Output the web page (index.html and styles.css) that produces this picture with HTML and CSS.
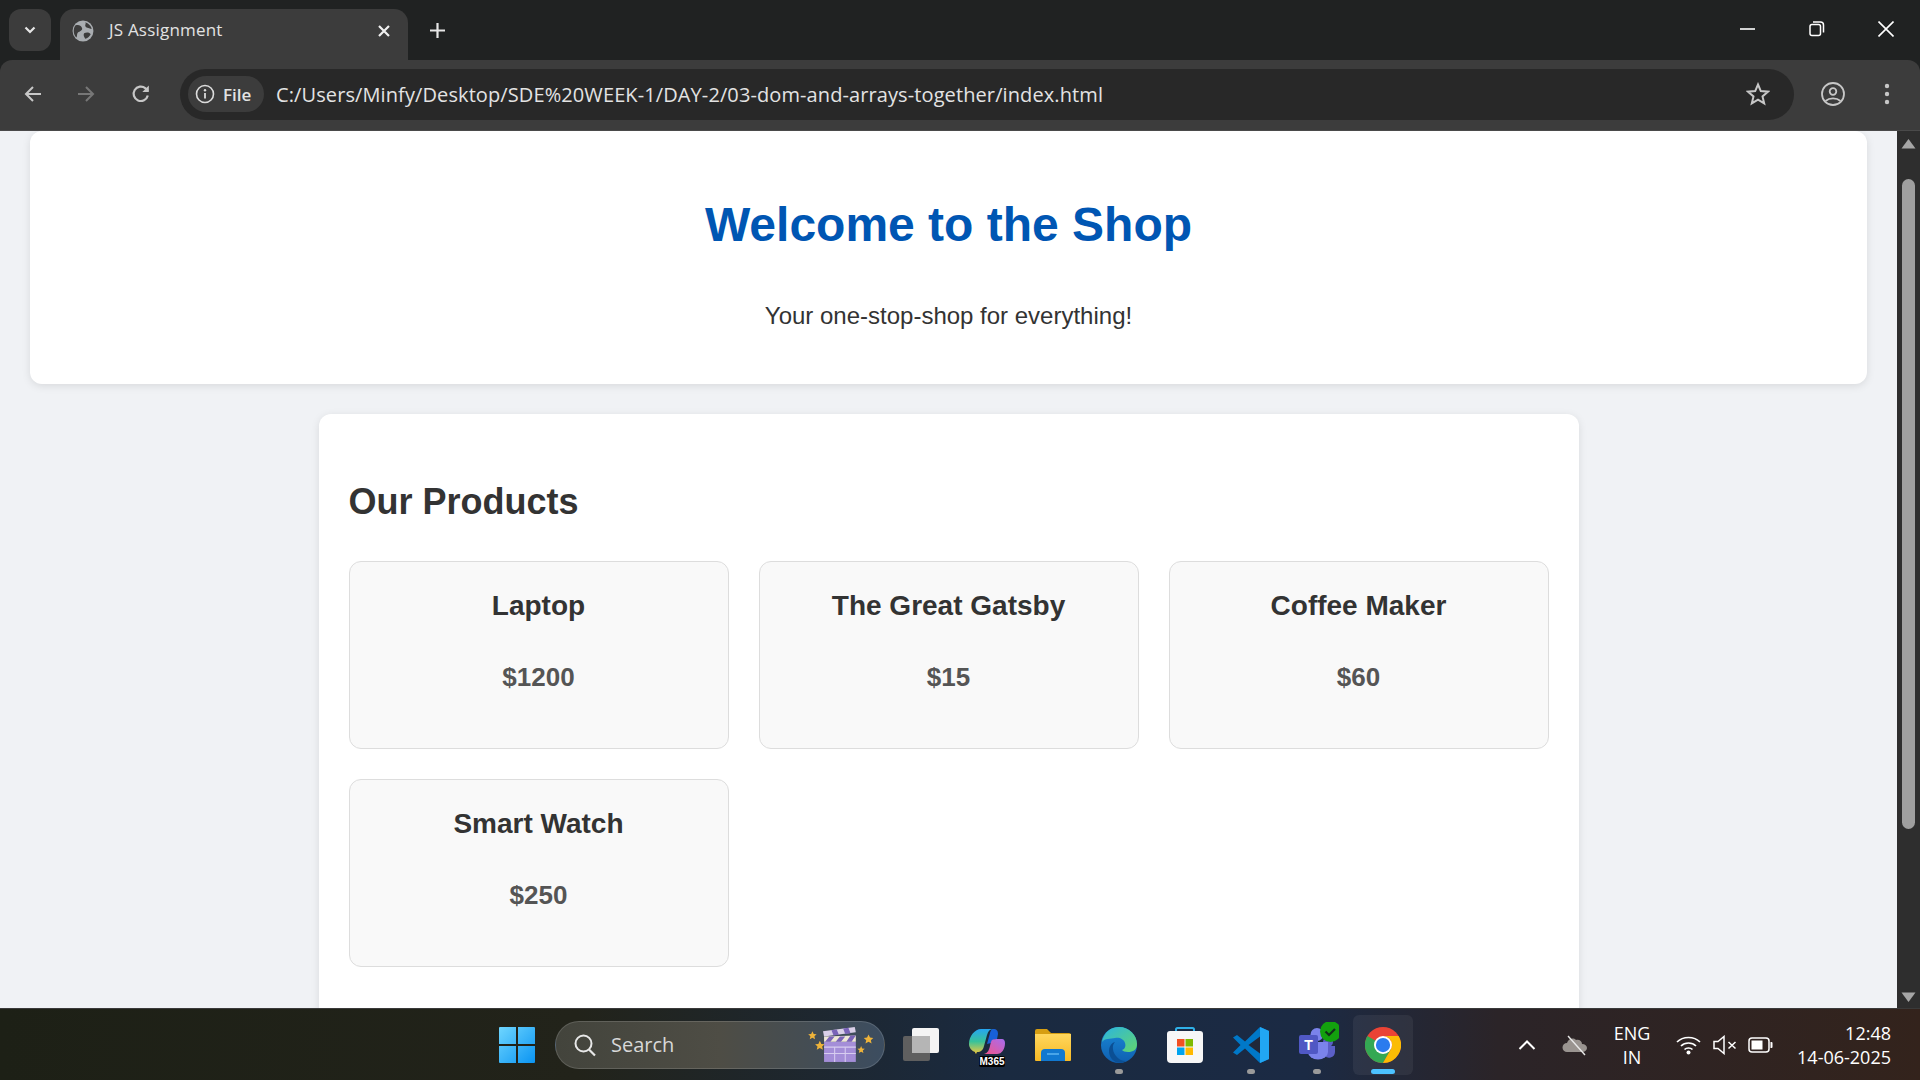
FILE: index.html
```html
<!DOCTYPE html>
<html lang="en">
<head>
<meta charset="utf-8">
<title>JS Assignment</title>
<link rel="stylesheet" href="styles.css">
</head>
<body>
<div class="tabstrip">
  <div class="tab-menu"><svg width="16" height="16" viewBox="0 0 16 16"><path d="M3.500 5.500l4.500 4.500 4.500-4.500" fill="none" stroke="#e6e6e6" stroke-width="2.200"/></svg></div>
  <div class="tab">
    <svg class="favicon" width="22" height="22" viewBox="0 0 20 20"><circle cx="10" cy="10" r="9.500" fill="#a9adb1"/><path d="M3 5c3-1 5 0 6 2s-1 3-3 4-1 4-2 5C1 13 1 8 3 5zM12 2c3 1 5 3 6 6-2 0-3-1-4-1s-2-1-2-2 1-2 0-3zM11 12c2-1 5-1 6 1-1 2-3 4-5 4-1-2-2-3-1-5z" fill="#3c3c3c"/></svg>
    <span class="tab-title">JS Assignment</span>
    <svg class="tab-close" width="14" height="14" viewBox="0 0 14 14"><path d="M2 2l10 10M12 2L2 12" stroke="#f0f0f0" stroke-width="2.200"/></svg>
  </div>
  <svg class="new-tab" width="17" height="17" viewBox="0 0 17 17"><path d="M8.500 1v15M1 8.500h15" stroke="#e6e6e6" stroke-width="2.200"/></svg>
  <div class="win-controls">
    <svg width="16" height="16" viewBox="0 0 16 16"><path d="M0 8h15" stroke="#fff" stroke-width="1.600"/></svg>
    <svg width="16" height="16" viewBox="0 0 16 16"><rect x="1" y="3.500" width="10.500" height="11" rx="2" fill="none" stroke="#fff" stroke-width="1.500"/><path d="M4 1h7.500A3 3 0 0 1 14.500 4v7.500" fill="none" stroke="#fff" stroke-width="1.500"/></svg>
    <svg width="16" height="16" viewBox="0 0 16 16"><path d="M.5.500l15 15M15.500.500l-15 15" stroke="#fff" stroke-width="1.600"/></svg>
  </div>
</div>
<div class="toolbar">
  <svg class="nav nav-back" width="20" height="20" viewBox="0 0 20 20"><path d="M18 10H3M10 3l-7 7 7 7" fill="none" stroke="#c7c7c7" stroke-width="2"/></svg>
  <svg class="nav nav-fwd" width="20" height="20" viewBox="0 0 20 20"><path d="M2 10h15M10 3l7 7-7 7" fill="none" stroke="#777" stroke-width="2"/></svg>
  <svg class="nav nav-reload" width="20" height="20" viewBox="0 0 20 20"><path d="M16.800 11.500A7.200 7.200 0 1 1 14.500 4.300L17 7" fill="none" stroke="#c7c7c7" stroke-width="2.200"/><path d="M17.800 1.500v6.500h-6.500z" fill="#c7c7c7"/></svg>
  <div class="omnibox">
    <div class="chip">
      <svg width="20" height="20" viewBox="0 0 20 20"><circle cx="10" cy="10" r="8.500" fill="none" stroke="#dcdcdc" stroke-width="1.600"/><path d="M10 9v5.500" stroke="#dcdcdc" stroke-width="1.800"/><circle cx="10" cy="6.300" r="1.200" fill="#dcdcdc"/></svg>
      <span class="chip-label">File</span>
    </div>
    <span class="url">C:/Users/Minfy/Desktop/SDE%20WEEK-1/DAY-2/03-dom-and-arrays-together/index.html</span>
    <svg class="star" width="24" height="24" viewBox="0 0 24 24"><path d="M12 2.500l2.800 6.600 7.200.600-5.500 4.700 1.700 7-6.200-3.700-6.200 3.700 1.700-7L2 9.700l7.200-.600z" fill="none" stroke="#c7c7c7" stroke-width="2"/></svg>
  </div>
  <svg class="profile" width="24" height="24" viewBox="0 0 24 24"><circle cx="12" cy="12" r="11" fill="none" stroke="#c7c7c7" stroke-width="1.800"/><circle cx="12" cy="9.500" r="3.300" fill="none" stroke="#c7c7c7" stroke-width="1.800"/><path d="M4.500 19c4-3.500 11-3.500 15 0" fill="none" stroke="#c7c7c7" stroke-width="1.800"/></svg>
  <svg class="kebab" width="6" height="22" viewBox="0 0 6 22"><circle cx="3" cy="3" r="2.200" fill="#c7c7c7"/><circle cx="3" cy="11" r="2.200" fill="#c7c7c7"/><circle cx="3" cy="19" r="2.200" fill="#c7c7c7"/></svg>
</div>
<div class="viewport">
  <div class="page">
    <header class="hero">
      <h1 class="hero-title">Welcome to the Shop</h1>
      <p class="hero-sub">Your one-stop-shop for everything!</p>
    </header>
    <main class="products">
      <h2 class="products-title">Our Products</h2>
      <div class="product-grid">
        <div class="product"><h3 class="product-name">Laptop</h3><p class="product-price">$1200</p></div>
        <div class="product"><h3 class="product-name">The Great Gatsby</h3><p class="product-price">$15</p></div>
        <div class="product"><h3 class="product-name">Coffee Maker</h3><p class="product-price">$60</p></div>
        <div class="product"><h3 class="product-name">Smart Watch</h3><p class="product-price">$250</p></div>
      </div>
    </main>
  </div>
  <div class="scrollbar">
    <svg width="15" height="11" viewBox="0 0 15 11" class="sb-up"><path d="M7.500 1L14.500 10.500H.5z" fill="#a6a6a6"/></svg>
    <div class="sb-thumb"></div>
    <svg width="15" height="11" viewBox="0 0 15 11" class="sb-down"><path d="M7.500 10L.5.500h14z" fill="#a6a6a6"/></svg>
  </div>
</div>
<footer class="taskbar">
  <div class="slot slot-start">
    <svg width="36" height="36" viewBox="0 0 36 36"><defs><linearGradient id="w" x1="0" y1="0" x2="1" y2="1"><stop offset="0" stop-color="#6fd6ff"/><stop offset="1" stop-color="#0a94f2"/></linearGradient></defs><path d="M1 0h16v17H0V1a1 1 0 0 1 1-1zM19 0h16a1 1 0 0 1 1 1v16H19zM0 19h17v17H1a1 1 0 0 1-1-1zM19 19h17v16a1 1 0 0 1-1 1H19z" fill="url(#w)"/></svg>
  </div>
  <div class="search">
    <svg width="24" height="24" viewBox="0 0 24 24"><circle cx="10.500" cy="10.500" r="8" fill="none" stroke="#e8e8e8" stroke-width="2"/><path d="M16 16.500l6 6" stroke="#e8e8e8" stroke-width="2.200"/></svg>
    <span class="search-label">Search</span>
    <svg class="clapper" width="72" height="36" viewBox="0 0 68 34"><rect x="18" y="14" width="30" height="19" fill="#a48ed8"/><path d="M18 19h30M18 25h30M28 19v14M38 19v14" stroke="#d7cdf0" stroke-width="1"/><path d="M18 9l30-1v6H18z" fill="#efe7d8"/><path d="M23 9l-4 5h5l4-5zM33 9l-4 5h5l4-5zM43 8l-4 6h5l4-6z" fill="#7a63b8"/><path d="M17 4l30-4 1 5-30 4z" fill="#d9cfe8"/><path d="M25 3l2 5 5-.7-2-5zM36 1.500l2 5 5-.7-2-5z" fill="#7a63b8"/><path d="M7 4l1.200 2.600 2.800.3-2.100 1.900.6 2.800L7 10.200l-2.500 1.400.6-2.800L3 6.900l2.800-.3zM14 13l1.400 3 3.100.3-2.300 2.100.7 3.100-2.900-1.600-2.900 1.600.7-3.100-2.300-2.100 3.100-.3zM60 7l1.400 3 3.100.3-2.300 2.100.7 3.100-2.900-1.600-2.900 1.600.7-3.100-2.300-2.100 3.100-.3zM53 18l1 2.300 2.500.2-1.900 1.700.6 2.400-2.200-1.300-2.200 1.300.6-2.400-1.900-1.700 2.500-.2z" fill="#eeb33a"/></svg>
  </div>
  <div class="slot">
    <svg width="38" height="36" viewBox="0 0 38 36"><rect x="1" y="9" width="27" height="25" rx="2" fill="#5f5f5f"/><rect x="10" y="1" width="27" height="25" rx="2" fill="#f4f4f4"/><rect x="10" y="9" width="18" height="17" fill="#b5b5b5"/></svg>
  </div>
  <div class="slot">
    <svg width="36" height="36" viewBox="0 0 36 36"><defs><linearGradient id="m1" x1="0" y1="0" x2="0" y2="1"><stop offset="0" stop-color="#25a5f2"/><stop offset=".5" stop-color="#38c29a"/><stop offset="1" stop-color="#f5c83a"/></linearGradient><linearGradient id="m2" x1="0" y1="1" x2="1" y2="0"><stop offset="0" stop-color="#f0558a"/><stop offset="1" stop-color="#a76cf0"/></linearGradient></defs><path d="M24 2c4 0 5 2 5 5l-1 5c-3 0-5 1-6 4l-4 1 3-11c.5-2 1.500-4 3-4z" fill="#1760d8"/><path d="M12 2h12c-3 0-5 2-6 6l-3 11c-1 4-3 6-7 6l-1 2c-1-1-1-2-1-2-3-1-6-4-6-8C0 9 6 2 12 2z" fill="url(#m1)"/><path d="M23 13c1.500-1 3-1 10-1 2 0 3 2 3 4 0 6-3 11-8 11H15c4-1 5-4 6-8 .5-2 1-5 2-6z" fill="url(#m2)"/></svg>
    <span class="m365">M365</span>
  </div>
  <div class="slot">
    <svg width="36" height="34" viewBox="0 0 36 34"><defs><linearGradient id="f" x1="0" y1="0" x2="0" y2="1"><stop offset="0" stop-color="#ffd75e"/><stop offset="1" stop-color="#f7b924"/></linearGradient></defs><path d="M0 3a2 2 0 0 1 2-2h10l4 4h18a2 2 0 0 1 2 2v4H0z" fill="#d69e12"/><path d="M0 6h36v26a1 1 0 0 1-1 1H1a1 1 0 0 1-1-1z" fill="url(#f)"/><path d="M6 33V25a4 4 0 0 1 4-4h16a4 4 0 0 1 4 4v8z" fill="#1178d0"/><path d="M12 26h12" stroke="#5cb4f0" stroke-width="1.500"/></svg>
  </div>
  <div class="slot has-dot">
    <svg width="36" height="36" viewBox="0 0 36 36"><defs><linearGradient id="e1" x1="0" y1="0" x2="1" y2="1"><stop offset="0" stop-color="#2bb4e0"/><stop offset="1" stop-color="#62d66f"/></linearGradient><linearGradient id="e2" x1="0" y1="0" x2="0" y2="1"><stop offset="0" stop-color="#1a8ad8"/><stop offset="1" stop-color="#0f5fb0"/></linearGradient></defs><circle cx="18" cy="18" r="18" fill="url(#e2)"/><path d="M1 15C3 5 10 0 18 0c10 0 18 8 18 17 0 6-4 8-9 8-3 0-5-1-6-2 3-1 4-4 3-7-1-4-6-6-10-5C9 12 4 11 1 15z" fill="url(#e1)"/><path d="M14 15c-3 3-3 9 1 14 2 3 6 5 10 5-8 5-17-1-17-10 0-4 2-8 6-9z" fill="#0b4f94"/></svg>
    <span class="dot"></span>
  </div>
  <div class="slot">
    <svg width="36" height="36" viewBox="0 0 36 36"><path d="M9 5V2.500a1.500 1.500 0 0 1 1.500-1.500h15A1.500 1.500 0 0 1 27 2.500V5" fill="none" stroke="#2fb0e8" stroke-width="2"/><path d="M0 7a3 3 0 0 1 3-3h30a3 3 0 0 1 3 3v25a4 4 0 0 1-4 4H4a4 4 0 0 1-4-4z" fill="#f7f7f7"/><rect x="10" y="12" width="7.500" height="7.500" fill="#f25022"/><rect x="18.500" y="12" width="7.500" height="7.500" fill="#7fba00"/><rect x="10" y="20.500" width="7.500" height="7.500" fill="#00a4ef"/><rect x="18.500" y="20.500" width="7.500" height="7.500" fill="#ffb900"/></svg>
  </div>
  <div class="slot has-dot">
    <svg width="36" height="38" viewBox="0 0 36 36"><path d="M27 0l9 4v28l-9 4-15-14.500L4 28l-4-2.500 7.500-7.500L0 10.500 4 8l8 6.500z" fill="#0078c8"/><path d="M27 0l9 4v28l-9 4z" fill="#21a6f3"/><path d="M27 9.500L15.500 18 27 26.500z" fill="#20283a"/></svg>
    <span class="dot"></span>
  </div>
  <div class="slot has-dot">
    <svg class="teams" width="44" height="44" viewBox="0 0 44 44"><circle cx="22" cy="12.500" r="6.500" fill="#7b83eb"/><circle cx="33" cy="20" r="5" fill="#5b5fc7"/><path d="M29 24h11v6a6 6 0 0 1-11 3z" fill="#5b5fc7"/><path d="M13 20h20v10a10 7.500 0 0 1-20 0z" fill="#7b83eb"/><rect x="4" y="13" width="19" height="19" rx="2" fill="#5058c4"/><text x="13.500" y="28" class="teams-t">T</text><circle cx="35.500" cy="9.500" r="10.500" fill="#13a10e"/><path d="M30.500 9.500l3.500 3.500 6-6" fill="none" stroke="#12301a" stroke-width="2.200"/></svg>
    <span class="dot"></span>
  </div>
  <div class="slot slot-active">
    <svg width="36" height="36" viewBox="0 0 48 48"><circle cx="24" cy="24" r="24" fill="#ea4335"/><path d="M24 24L3.200 12A24 24 0 0 0 24 48l10.400-18z" fill="#34a853"/><path d="M24 12h20.800A24 24 0 0 1 24 48l10.400-18A12 12 0 0 0 24 12z" fill="#fbbc04"/><circle cx="24" cy="24" r="12" fill="#fff"/><circle cx="24" cy="24" r="9.500" fill="#2b7bee"/></svg>
    <span class="dot dot-active"></span>
  </div>
  <div class="tray">
    <div class="tray-item tray-chevron"><svg width="18" height="12" viewBox="0 0 18 12"><path d="M1.500 10L9 2.500 16.500 10" fill="none" stroke="#fff" stroke-width="2"/></svg></div>
    <div class="tray-item tray-cloud"><svg width="26" height="22" viewBox="0 0 26 22"><path d="M5 18a4.500 4.500 0 0 1 0-9c1-4 6-6 9-3 3-1 6 1 6 4 3 0 5 2 5 4s-2 4-5 4z" fill="#9a9490"/><path d="M6 2l17 19" stroke="#e8e8e8" stroke-width="1.400"/></svg></div>
    <div class="tray-lang"><span>ENG</span><span>IN</span></div>
    <div class="tray-item tray-wifi"><svg width="25" height="20" viewBox="0 0 25 20"><path d="M1 7c6-6 17-6 23 0M5 11c4-4 11-4 15 0M8.500 14.500c2-2 6-2 8 0" fill="none" stroke="#fff" stroke-width="1.700"/><circle cx="12.500" cy="17.500" r="2" fill="#fff"/></svg></div>
    <div class="tray-item tray-vol"><svg width="24" height="20" viewBox="0 0 24 20"><path d="M1 6.500h4L11 1.500v17l-6-5H1z" fill="none" stroke="#fff" stroke-width="1.500"/><path d="M15.500 7l7 6.500M22.500 7l-7 6.500" stroke="#fff" stroke-width="1.500"/></svg></div>
    <div class="tray-item tray-batt"><svg width="25" height="16" viewBox="0 0 25 16"><rect x="1" y="1" width="20" height="14" rx="3" fill="none" stroke="#fff" stroke-width="1.500"/><rect x="3.500" y="3.500" width="11" height="9" fill="#fff"/><path d="M22.500 5h1a1 1 0 0 1 1 1v4a1 1 0 0 1-1 1h-1z" fill="#fff"/></svg></div>
    <div class="tray-clock"><span>12:48</span><span>14-06-2025</span></div>
  </div>
</footer>
</body>
</html>
```
FILE: styles.css
```css
* { box-sizing: border-box; }
html, body { margin: 0; height: 100%; }
body {
  display: flex;
  flex-direction: column;
  height: 100vh;
  overflow: hidden;
  font-family: "Liberation Sans", Arial, sans-serif;
  background: #202222;
}

/* Browser chrome */
.tabstrip {
  height: 60px;
  flex: none;
  display: flex;
  align-items: flex-start;
  background: #202222;
  padding: 9px 0 0 9px;
}
.tab-menu {
  width: 42px;
  height: 42px;
  border-radius: 12px;
  background: #3c3c3c;
  display: flex;
  align-items: center;
  justify-content: center;
}
.tab {
  margin-left: 9px;
  width: 348px;
  height: 51px;
  background: #3c3c3c;
  border-radius: 14px 14px 0 0;
  display: flex;
  align-items: center;
  padding: 0 17px 7px 12px;
  color: #e3e3e3;
}
.tab-title {
  margin-left: 15px;
  font-family: "Open Sans", sans-serif;
  font-size: 17px;
  letter-spacing: 0.2px;
  line-height: 22px;
  margin-bottom: 2px;
  flex: 1;
}
.new-tab { margin: 13px 0 0 21px; }
.win-controls {
  margin-left: auto;
  display: flex;
  gap: 53px;
  padding: 12px 26px 0 0;
}
.toolbar {
  height: 71px;
  flex: none;
  display: flex;
  align-items: center;
  background: #3c3c3c;
  border-radius: 12px 12px 0 0;
  border-bottom: 1px solid #4a4a4a;
  padding: 0 0 2px 23px;
}
.nav-fwd { margin-left: 33px; }
.nav-reload { margin-left: 35px; }
.omnibox {
  margin-left: 29px;
  width: 1614px;
  height: 51px;
  background: #282828;
  border-radius: 26px;
  display: flex;
  align-items: center;
  padding: 0 24px 0 8px;
}
.chip {
  width: 76px;
  height: 36px;
  border-radius: 18px;
  background: #3c3c3c;
  display: flex;
  align-items: center;
  padding-left: 7px;
  gap: 8px;
}
.chip-label {
  font-family: "Open Sans", sans-serif;
  font-weight: 600;
  font-size: 17px;
  color: #e3e3e3;
}
.url {
  margin-left: 12px;
  font-family: "Open Sans", sans-serif;
  font-size: 20px;
  letter-spacing: 0.1px;
  color: #e3e3e3;
  white-space: nowrap;
}
.star { margin-left: auto; }
.profile { margin-left: 27px; }
.kebab { margin-left: 39px; }

/* Page */
.viewport {
  flex: 1;
  min-height: 0;
  display: flex;
  overflow: hidden;
}
.page {
  flex: 1;
  min-width: 0;
  background: #f0f2f5;
  padding: 0 30px;
  line-height: 1.6;
  color: #333;
}
.hero {
  height: 253px;
  background: #fff;
  border-radius: 12px;
  box-shadow: 0 2px 8px rgba(0, 0, 0, 0.1);
  text-align: center;
  padding-top: 56px;
}
.hero-title {
  margin: 0;
  font-size: 48px;
  color: #0056b3;
}
.hero-sub {
  margin: 33px 0 0;
  font-size: 24px;
}
.products {
  width: 1260px;
  margin: 30px auto 0;
  background: #fff;
  border-radius: 12px;
  box-shadow: 0 2px 8px rgba(0, 0, 0, 0.1);
  padding: 59px 30px 120px;
}
.products-title {
  margin: 0 0 30px;
  font-size: 36px;
}
.product-grid {
  display: grid;
  grid-template-columns: repeat(3, 1fr);
  gap: 30px;
}
.product {
  background: #f9f9f9;
  border: 1px solid #ddd;
  border-radius: 12px;
  padding: 22px 20px 20px;
  text-align: center;
}
.product-name {
  margin: 0 0 29px;
  font-size: 28px;
}
.product-price {
  margin: 0 0 28.6px;
  font-size: 26px;
  font-weight: 700;
  color: #555;
}
.scrollbar {
  width: 23px;
  flex: none;
  background: #2e2e2e;
  display: flex;
  flex-direction: column;
  align-items: center;
  padding-top: 7px;
}
.sb-thumb {
  width: 13px;
  height: 650px;
  margin-top: 30px;
  background: #9f9f9f;
  border-radius: 7px;
}
.sb-down { margin-top: auto; margin-bottom: 5px; }

/* Taskbar */
.taskbar {
  height: 72px;
  flex: none;
  display: flex;
  align-items: center;
  padding-left: 484px;
  border-top: 1px solid #3a3a3a;
  background: linear-gradient(90deg, #1d2016 0%, #22231a 30%, #1a2a40 52%, #1b2a44 68%, #2b2428 78%, #33231c 100%);
}
.slot {
  position: relative;
  width: 66px;
  height: 60px;
  display: flex;
  align-items: center;
  justify-content: center;
  flex: none;
}
.slot-active {
  background: rgba(255, 255, 255, 0.06);
  border-radius: 6px;
  width: 60px;
  margin-left: 3px;
}
.teams { margin: -2px 0 0 0; }
.search {
  width: 330px;
  height: 48px;
  margin: 0 3px 0 5px;
  border-radius: 24px;
  border: 1px solid rgba(255, 255, 255, 0.14);
  background: linear-gradient(90deg, #43443c 0%, #4e4d45 50%, #3c4d60 100%);
  display: flex;
  align-items: center;
  padding-left: 17px;
  color: #d8d8d8;
}
.search-label {
  margin-left: 14px;
  font-family: "Open Sans", sans-serif;
  font-size: 20px;
}
.clapper { margin-left: auto; margin-right: 7px; }
.dot {
  position: absolute;
  left: 50%;
  bottom: 1px;
  width: 8px;
  height: 5px;
  margin-left: -4px;
  border-radius: 3px;
  background: #9a9a9a;
}
.dot-active {
  width: 24px;
  margin-left: -12px;
  background: #4cc2ff;
}
.m365 {
  position: absolute;
  left: 25px;
  bottom: 8px;
  width: 26px;
  text-align: center;
  background: #000;
  color: #fff;
  font-family: "Liberation Sans", sans-serif;
  font-size: 10px;
  font-weight: 700;
  line-height: 11px;
  border-radius: 2px;
}
.teams-t {
  font-family: "Liberation Sans", sans-serif;
  font-weight: 700;
  font-size: 14px;
  fill: #fff;
  text-anchor: middle;
}
.tray {
  margin-left: 90px;
  flex: 1;
  display: flex;
  align-items: center;
  color: #fff;
  font-family: "Open Sans", sans-serif;
  font-size: 18px;
  padding-right: 29px;
}
.tray-item {
  display: flex;
  align-items: center;
  justify-content: center;
}
.tray-chevron { width: 48px; }
.tray-cloud { width: 48px; }
.tray-lang {
  width: 66px;
  display: flex;
  flex-direction: column;
  align-items: center;
  line-height: 24px;
}
.tray-wifi { width: 44px; margin-left: 1px; }
.tray-vol { width: 30px; }
.tray-batt { width: 42px; margin-left: -1px; }
.tray-clock {
  margin-left: auto;
  display: flex;
  flex-direction: column;
  align-items: flex-end;
  line-height: 24px;
}
```
